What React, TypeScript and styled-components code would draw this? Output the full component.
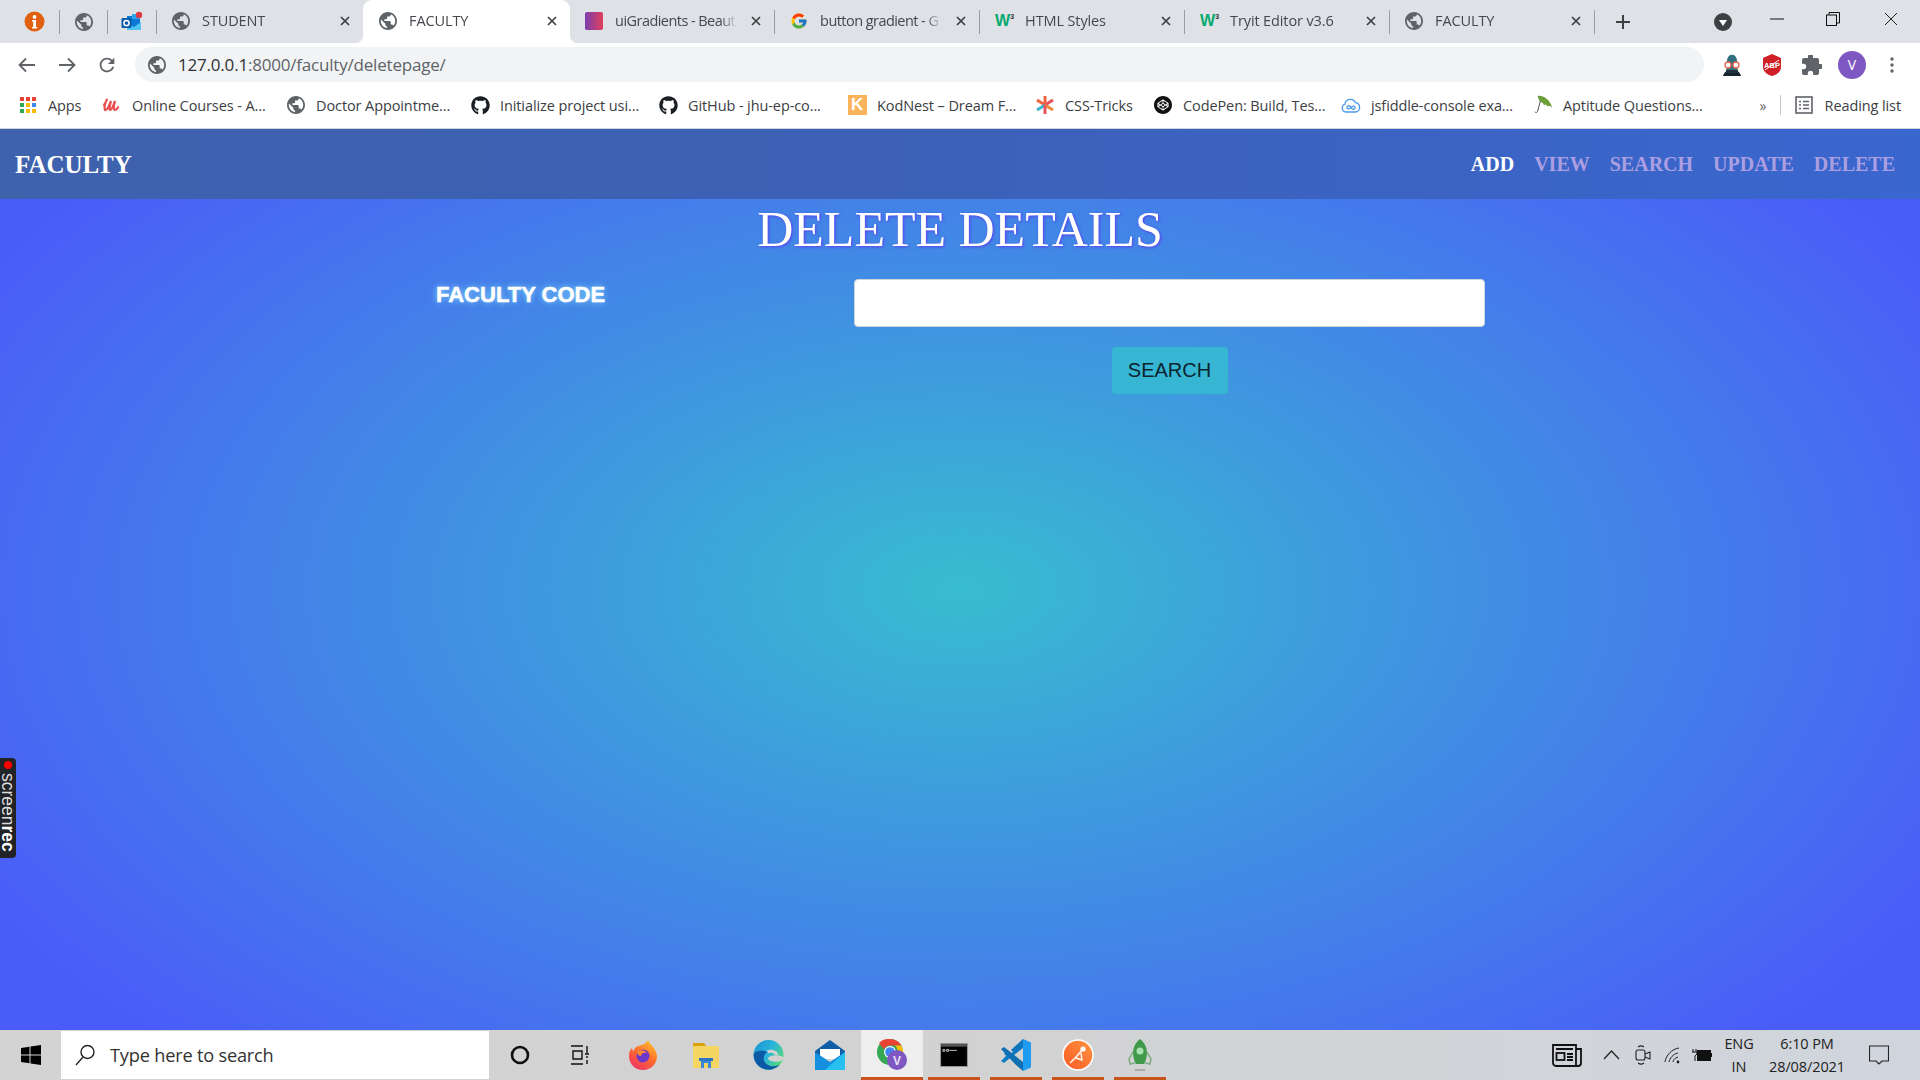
import React from "react";
import styled, { createGlobalStyle } from "styled-components";
import { FaGithub } from "react-icons/fa";
import { FcGoogle } from "react-icons/fc";
import { SiCodepen } from "react-icons/si";

const Global = createGlobalStyle`
  html, body { margin: 0; padding: 0; background: #fff; }
  * { box-sizing: border-box; }
`;

const UI = `"Open Sans", "Noto Sans", sans-serif`;

const Root = styled.div`
  position: relative;
  width: 1920px;
  height: 1080px;
  display: flex;
  flex-direction: column;
  overflow: hidden;
  font-family: ${UI};
`;

const TabStrip = styled.div`
  height: 43px;
  flex: none;
  display: flex;
  align-items: center;
  background: #dee1e6;
  padding-left: 11px;
`;
const Pinned = styled.div`
  width: 47.7px;
  height: 28px;
  display: flex;
  align-items: center;
  justify-content: center;
  flex: none;
`;
const Sep = styled.div`
  width: 1px;
  height: 24px;
  background: #9a9da1;
  flex: none;
`;
const Tab = styled.div<{ $active?: boolean; $w: number }>`
  position: relative;
  width: ${(p) => p.$w}px;
  height: 43px;
  flex: none;
  display: flex;
  align-items: center;
  gap: 12px;
  padding: 0 12px 2px ${(p) => (p.$active ? 16 : 15)}px;
  background: ${(p) => (p.$active ? "#fff" : "transparent")};
  border-radius: ${(p) => (p.$active ? "9px 9px 0 0" : "0")};
  ${(p) =>
    p.$active &&
    `
    &::before, &::after {
      content: "";
      position: absolute;
      bottom: 0;
      width: 8px;
      height: 8px;
    }
    &::before { left: -8px; background: radial-gradient(circle at 0 0, transparent 8px, #fff 8.5px); }
    &::after { right: -8px; background: radial-gradient(circle at 100% 0, transparent 8px, #fff 8.5px); }
  `}
`;
const TabTitle = styled.span<{ $tight?: boolean }>`
  flex: 1;
  min-width: 0;
  white-space: nowrap;
  overflow: hidden;
  font-size: 14.5px;
  letter-spacing: ${(p) => (p.$tight ? "-0.55px" : "-0.12px")};
  color: #45484c;
  mask-image: linear-gradient(90deg, #000 86%, transparent 99%);
`;
const TabIcon = styled.span`
  width: 18px;
  height: 18px;
  flex: none;
  display: flex;
  align-items: center;
  justify-content: center;
`;
const W3Logo = styled.span`
  font-family: "Liberation Sans", sans-serif;
  font-weight: 700;
  font-size: 16px;
  line-height: 18px;
  color: #04aa6d;
  letter-spacing: -1px;
  & > sup {
    font-size: 7px;
    color: #333;
    vertical-align: 7px;
    line-height: 0;
    margin-left: 1px;
  }
`;
const NewTab = styled.div`
  width: 56px;
  display: flex;
  justify-content: center;
  flex: none;
`;
const StripSpacer = styled.div`
  flex: 1;
`;
const ProfileMenu = styled.div`
  width: 20px;
  height: 20px;
  margin-right: 16px;
  display: flex;
  flex: none;
`;
const WinButton = styled.div<{ $w: number }>`
  width: ${(p) => p.$w}px;
  height: 43px;
  display: flex;
  align-items: center;
  justify-content: center;
  flex: none;
  padding-bottom: 6px;
`;

const Toolbar = styled.div`
  height: 43px;
  flex: none;
  background: #fff;
  display: flex;
  align-items: center;
  padding: 0 8px 0 7px;
`;
const ToolBtn = styled.div`
  width: 40px;
  height: 34px;
  flex: none;
  display: flex;
  align-items: center;
  justify-content: center;
`;
const Omnibox = styled.div`
  flex: 1;
  height: 35px;
  margin: 0 8px;
  border-radius: 18px;
  background: #f1f3f4;
  display: flex;
  align-items: center;
  gap: 12px;
  padding-left: 13px;
  font-size: 17px;
  letter-spacing: -0.2px;
  color: #5f6368;
  & > span > b {
    font-weight: 400;
    color: #303134;
  }
`;
const Avatar = styled.div`
  width: 28px;
  height: 28px;
  border-radius: 50%;
  background: #7e57c2;
  color: #fff;
  font-size: 14px;
  display: flex;
  align-items: center;
  justify-content: center;
`;

const Bookmarks = styled.div`
  height: 43px;
  flex: none;
  background: #fff;
  border-bottom: 1px solid #cfd4dc;
  display: flex;
  align-items: center;
  padding: 0 0 4px 18px;
`;
const Bookmark = styled.div<{ $w: number }>`
  width: ${(p) => p.$w}px;
  flex: none;
  display: flex;
  align-items: center;
  gap: 10px;
  font-size: 14.5px;
  letter-spacing: -0.1px;
  color: #3c4043;
  white-space: nowrap;
`;
const BmIcon = styled.span`
  width: 20px;
  height: 20px;
  flex: none;
  display: flex;
  align-items: center;
  justify-content: center;
`;
const KLogo = styled.span`
  width: 19px;
  height: 20px;
  background: #fbb45c;
  color: #fff;
  font-family: "Liberation Sans", sans-serif;
  font-weight: 700;
  font-size: 17px;
  line-height: 20px;
  text-align: center;
`;
const BarEnd = styled.div`
  margin-left: auto;
  display: flex;
  align-items: center;
  padding-right: 19px;
  font-size: 14.5px;
  letter-spacing: -0.1px;
  color: #3c4043;
`;
const More = styled.span`
  width: 18px;
  color: #5f6368;
  font-size: 14px;
  margin-right: 2px;
`;
const BarSep = styled.div`
  width: 1px;
  height: 20px;
  background: #c6c8cb;
  margin-right: 14px;
`;
const ReadingLabel = styled.span`
  margin-left: 12px;
`;

const Page = styled.main`
  flex: 1;
  min-height: 0;
  background: radial-gradient(ellipse 1120px 640px at 50% 51%, #38bcd0 0%, #4a5cf8 100%);
`;
const Nav = styled.nav`
  height: 70px;
  display: flex;
  align-items: center;
  justify-content: space-between;
  padding: 2px 25px 0 15px;
  background: linear-gradient(90deg, #3f62ad 0%, #3c60b4 40%, #3a66cf 100%);
  font-family: "Liberation Serif", serif;
  font-weight: 700;
`;
const Brand = styled.div`
  font-size: 25px;
  color: #fff;
`;
const NavLinks = styled.div`
  display: flex;
  gap: 20px;
  padding-bottom: 2px;
`;
const NavLink = styled.a<{ $current?: boolean }>`
  font-size: 20px;
  color: ${(p) => (p.$current ? "#fff" : "#ab9fe2")};
`;
const Title = styled.h1`
  margin: 0;
  text-align: center;
  font-family: "Liberation Serif", serif;
  font-weight: 400;
  font-size: 50px;
  line-height: 60px;
  color: #fff;
  text-shadow: 1px 1px 3px #5a3df0;
`;
const Form = styled.form`
  margin-top: 20px;
  padding-left: 436px;
  display: grid;
  grid-template-columns: 418px 631px;
  row-gap: 20px;
`;
const FieldLabel = styled.label`
  padding-top: 3px;
  font-family: "Liberation Sans", sans-serif;
  font-weight: 700;
  font-size: 22px;
  line-height: 26px;
  color: #fff;
  -webkit-text-stroke: 0.5px #fff;
  text-shadow: 0 0 6px #8fe0ff;
`;
const Input = styled.input`
  height: 48px;
  width: 100%;
  border: 1px solid #ced4da;
  border-radius: 4px;
  background: #fff;
`;
const SubmitCell = styled.div`
  grid-column: 2;
  display: flex;
  justify-content: center;
`;
const Submit = styled.button`
  width: 116px;
  height: 47px;
  border: 0;
  border-radius: 4px;
  background: #36b6d2;
  color: #0d2530;
  font-family: "Liberation Sans", sans-serif;
  font-size: 20px;
  padding: 0 0 1px;
`;

const Recorder = styled.div`
  position: absolute;
  left: 0;
  top: 758px;
  width: 16px;
  height: 100px;
  background: #222326;
  border-radius: 0 4px 4px 0;
  display: flex;
  flex-direction: column;
  align-items: center;
  padding-top: 3px;
`;
const RecDot = styled.div`
  width: 8px;
  height: 8px;
  border-radius: 50%;
  background: #f00;
  flex: none;
`;
const RecText = styled.div`
  writing-mode: vertical-rl;
  font-family: "Liberation Sans", sans-serif;
  font-size: 17.5px;
  line-height: 16px;
  margin-top: 4px;
  color: #ddd;
  white-space: nowrap;
  & > b {
    color: #fff;
  }
`;

const Taskbar = styled.footer`
  height: 50px;
  flex: none;
  display: flex;
  align-items: stretch;
  background: linear-gradient(90deg, #d3d3d3 0%, #d2d2d2 50%, #d0d5dd 100%);
`;
const StartBtn = styled.div`
  width: 61px;
  flex: none;
  display: flex;
  align-items: center;
  justify-content: center;
`;
const SearchBox = styled.div`
  width: 428px;
  flex: none;
  margin: 1px 0;
  background: #fff;
  display: flex;
  align-items: center;
  gap: 14px;
  padding-left: 13px;
  font-size: 18.2px;
  letter-spacing: -0.2px;
  color: #333;
`;
const TaskSlot = styled.div<{ $open?: boolean; $active?: boolean; $w?: number }>`
  position: relative;
  width: ${(p) => p.$w ?? 62}px;
  flex: none;
  display: flex;
  align-items: center;
  justify-content: center;
  background: ${(p) => (p.$active ? "#eeeeee" : "transparent")};
  ${(p) =>
    p.$open &&
    `
    &::after {
      content: "";
      position: absolute;
      bottom: 0;
      height: 3px;
      left: ${p.$active ? 0 : 5}px;
      right: ${p.$active ? 0 : 5}px;
      background: #c8541b;
    }
  `}
`;
const Tray = styled.div`
  margin-left: auto;
  padding-right: 14px;
  display: flex;
  align-items: center;
`;
const TrayIcon = styled.div<{ $w: number }>`
  width: ${(p) => p.$w}px;
  flex: none;
  display: flex;
  justify-content: center;
  align-items: center;
`;
const TrayText = styled.div<{ $w: number }>`
  width: ${(p) => p.$w}px;
  flex: none;
  display: flex;
  flex-direction: column;
  align-items: center;
  gap: 5px;
  font-size: 14.5px;
  line-height: 18px;
  letter-spacing: -0.1px;
  color: #222;
`;

const Globe = ({ s = 18 }: { s?: number }) => (
  <svg width={s} height={s} viewBox="2 2 20 20" fill="#5f6368">
    <path d="M12 2C6.48 2 2 6.48 2 12s4.48 10 10 10 10-4.48 10-10S17.52 2 12 2zm-1 17.93c-3.95-.49-7-3.85-7-7.93 0-.62.08-1.21.21-1.79L9 15v1c0 1.1.9 2 2 2v1.93zm6.9-2.54c-.26-.81-1-1.39-1.9-1.39h-1v-3c0-.55-.45-1-1-1H8v-2h2c.55 0 1-.45 1-1V7h2c1.1 0 2-.9 2-2v-.41c2.93 1.19 5 4.06 5 7.41 0 2.08-.8 3.97-2.1 5.39z" />
  </svg>
);
const CloseGlyph = styled.svg`
  flex: none;
`;
const CloseX = () => (
  <CloseGlyph width="12" height="12" viewBox="0 0 12 12" stroke="#3c4043" strokeWidth="1.7" fill="none">
    <path d="M2 2l8 8M10 2l-8 8" />
  </CloseGlyph>
);
const InfoIcon = () => (
  <svg width="21" height="21" viewBox="0 0 21 21">
    <circle cx="10.5" cy="10.5" r="10" fill="#e0600f" />
    <circle cx="10.5" cy="6" r="1.9" fill="#fff" />
    <path d="M8 9h4v7h1.2v1.6H8V16h1.2v-5.4H8z" fill="#fff" />
  </svg>
);
const Outlook = () => (
  <svg width="22" height="22" viewBox="0 0 22 22">
    <path d="M6 5h13v13H6z" fill="#0f78d4" />
    <path d="M11 3h8v5h-8z" fill="#28a8ea" />
    <path d="M6 12l7 4 7-5v8H6z" fill="#50c3f0" />
    <rect x="0.5" y="7" width="10" height="10" rx="1" fill="#0a5ca8" />
    <circle cx="5.5" cy="12" r="2.6" fill="none" stroke="#fff" strokeWidth="1.5" />
    <circle cx="18" cy="4" r="3.2" fill="#e03a45" />
  </svg>
);
const GradientSquare = () => (
  <svg width="20" height="20" viewBox="0 0 20 20">
    <defs>
      <linearGradient id="ug" x1="0" x2="1" y1="0" y2="0">
        <stop offset="0" stopColor="#7b3fb0" />
        <stop offset="1" stopColor="#e0405a" />
      </linearGradient>
    </defs>
    <rect width="20" height="20" rx="2" fill="url(#ug)" />
  </svg>
);
const W3 = () => (
  <W3Logo>
    W<sup>3</sup>
  </W3Logo>
);
const Apps = () => (
  <svg width="16" height="16" viewBox="0 0 16 16">
    {[
      "#ea4335", "#ea4335", "#ea4335",
      "#34a853", "#fbbc04", "#4285f4",
      "#34a853", "#fbbc04", "#fbbc04",
    ].map((c, i) => (
      <rect key={i} x={(i % 3) * 6} y={Math.floor(i / 3) * 6} width="4" height="4" fill={c} />
    ))}
  </svg>
);
const ULogo = () => (
  <svg width="18" height="18" viewBox="0 0 18 18" fill="none" stroke="#ec5252" strokeWidth="2.2" strokeLinecap="round">
    <path d="M1 9c2-3 3-5 3-6-2 4-3 8-2 11 2 1 4-4 6-9-1 4-2 8-1 9 2 0 3-4 5-9-1 4-2 9 0 9 1 0 3-2 3-3" />
  </svg>
);
const CssTricks = () => (
  <svg width="20" height="20" viewBox="0 0 20 20" strokeWidth="3" strokeLinecap="butt">
    <path d="M10 1v9" stroke="#f0613f" />
    <path d="M2 5l8 5" stroke="#f0613f" />
    <path d="M18 5l-8 5" stroke="#e8505b" />
    <path d="M2 15l8-5" stroke="#3db5c9" />
    <path d="M18 15l-8-5" stroke="#f08a3f" />
    <path d="M10 19v-9" stroke="#e8505b" />
  </svg>
);
const CloudInf = () => (
  <svg width="20" height="16" viewBox="0 0 20 16" fill="none" stroke="#4a9bea" strokeWidth="1.3">
    <path d="M5 15a4 4 0 0 1-1-7.8 5.5 5.5 0 0 1 10.5-1.6A4.8 4.8 0 0 1 15 15z" />
    <path d="M10 10.5c-1-1.4-2-2-3-1.7-1.5.5-1.5 2.600 0 3 1 .3 2-.3 3-1.300 1-1 2-1.600 3-1.300 1.500.400 1.500 2.500 0 3-1 .3-2-.300-3-1.700z" />
  </svg>
);
const Umbrella = () => (
  <svg width="24" height="24" viewBox="0 0 22 22">
    <path d="M5 1c6-1 14 4 16 13-2-2-4-3-5-1-1-3-3-3-4-2-1-3-3-3-4-3C7 6 6 4 5 1z" fill="#6c9e3a" />
    <path d="M8 7L5 18c-.4 1.500-2 1.500-3 .5" fill="none" stroke="#555" strokeWidth="1.1" />
  </svg>
);
const ReadingList = () => (
  <svg width="18" height="18" viewBox="0 0 18 18" fill="none" stroke="#5f6368" strokeWidth="1.6">
    <rect x="1" y="1" width="16" height="16" />
    <path d="M4 5.500h2M8 5.500h6M4 9h2M8 9h6M4 12.500h2M8 12.500h6" />
  </svg>
);
const Spy = () => (
  <svg width="24" height="24" viewBox="0 0 24 24">
    <path d="M6 21l1-14c1-7 9-7 10 0l1 14z" fill="#2f6f7f" />
    <path d="M3 23c1-4 4-6 9-6s8 2 9 6z" fill="#15262c" />
    <circle cx="8" cy="12" r="3" fill="#fff" stroke="#e8654a" strokeWidth="1.3" />
    <circle cx="16" cy="12" r="3" fill="#fff" stroke="#e8654a" strokeWidth="1.3" />
    <path d="M6 17h12v3H6z" fill="#20343a" />
  </svg>
);
const Abp = () => (
  <svg width="20" height="24" viewBox="0 0 20 24">
    <path d="M10 1l9 4v9c0 5-5 8-9 9-4-1-9-4-9-9V5z" fill="#d01f26" />
    <text x="10" y="15" textAnchor="middle" fontSize="7.500" fontWeight="700" fontFamily="Liberation Sans" fill="#fff">ABP</text>
    <path d="M3 17L17 7" stroke="#fff" strokeWidth="1" />
  </svg>
);
const Puzzle = () => (
  <svg width="20" height="20" viewBox="2 2 20 20" fill="#5f6368">
    <path d="M20.500 11H19V7a2 2 0 0 0-2-2h-4V3.500a2.500 2.500 0 0 0-5 0V5H4a2 2 0 0 0-2 2v3.800h1.500a2.700 2.700 0 0 1 0 5.400H2V20a2 2 0 0 0 2 2h3.800v-1.500a2.700 2.700 0 0 1 5.400 0V22H17a2 2 0 0 0 2-2v-4h1.500a2.500 2.500 0 0 0 0-5z" />
  </svg>
);
const Firefox = () => (
  <svg width="30" height="32" viewBox="0 0 30 32">
    <defs>
      <linearGradient id="ff" x1="0.800" y1="0" x2="0.200" y2="1">
        <stop offset="0" stopColor="#ffc22e" />
        <stop offset="0.500" stopColor="#ff6a2e" />
        <stop offset="1" stopColor="#f0306a" />
      </linearGradient>
    </defs>
    <path d="M20 1c1 4 8 7 9 16 0 8-6 14-14 14S1 25 1 17c0-4 1-6 3-8 0 2 1 3 2 3 0-3 3-5 5-5 2-1 7-2 9-6z" fill="url(#ff)" />
    <circle cx="15" cy="17" r="6.500" fill="#6b38c8" />
    <path d="M9 13c3-3 8-2 10 1-3-1-6 0-6 3-2 0-4-2-4-4z" fill="#ff8a30" />
  </svg>
);
const Explorer = () => (
  <svg width="28" height="28" viewBox="0 0 28 28">
    <path d="M1 2h11l3 4H1z" fill="#d9a00f" />
    <path d="M1 5h26v22H1z" fill="#f6d662" />
    <path d="M9 18h10v9h-3v-5h-4v5H9z" fill="#3b8ad9" />
    <path d="M7 17h14v3H7z" fill="#2a74c2" />
  </svg>
);
const Edge = () => (
  <svg width="31" height="32" viewBox="0 0 31 32">
    <defs>
      <linearGradient id="eg" x1="0" y1="0" x2="1" y2="0.600">
        <stop offset="0" stopColor="#1a8ed0" />
        <stop offset="0.550" stopColor="#2ab4dc" />
        <stop offset="1" stopColor="#55d97a" />
      </linearGradient>
    </defs>
    <circle cx="15.500" cy="16" r="15" fill="url(#eg)" />
    <path d="M.6 16a15 15 0 0 0 26.400 9.500c-6 3-13 2-15.500-3-2-4 0-8 3-9.500-6-2.500-13.500-1-13.900 3z" fill="#0c5aa6" />
    <ellipse cx="23" cy="19.500" rx="8" ry="3.200" fill="#d2d2d2" />
    <path d="M14.500 13c3-1.500 8-1 9.500 3" fill="none" stroke="#d2d2d2" strokeWidth="3" />
  </svg>
);
const Mail = () => (
  <svg width="30" height="32" viewBox="0 0 30 32">
    <path d="M15 1L30 12v6H0v-6z" fill="#0f5ea8" />
    <path d="M5 10h20v10H5z" fill="#fff" />
    <path d="M0 13l15 10 15-10v18H0z" fill="#1490df" />
    <path d="M30 13v18H10z" fill="#28c0f0" />
  </svg>
);
const ChromeV = () => (
  <svg width="32" height="34" viewBox="0 0 32 34">
    <circle cx="14" cy="14" r="13" fill="#34a853" />
    <path d="M14 1a13 13 0 0 1 11.300 6.500H14a6.500 6.500 0 0 0-6 4L3 5a13 13 0 0 1 11-4z" fill="#ea4335" />
    <path d="M25.300 7.500A13 13 0 0 1 14 27l6-10a6.500 6.500 0 0 0-1-9.500z" fill="#fbbc04" />
    <circle cx="14" cy="14" r="6" fill="#fff" />
    <circle cx="14" cy="14" r="4.800" fill="#4285f4" />
    <circle cx="21" cy="22" r="10" fill="#7e57c2" />
    <text x="21" y="26.500" textAnchor="middle" fontSize="12" fontWeight="700" fontFamily="Liberation Sans" fill="#e8e0f5">V</text>
  </svg>
);
const Terminal = () => (
  <svg width="28" height="24" viewBox="0 0 30 26">
    <rect x="0.500" y="0.500" width="29" height="25" fill="#000" stroke="#9a9a9a" />
    <rect x="1" y="1" width="28" height="3" fill="#555" />
    <path d="M3 7h2v2H3zM7 7h2v2H7zM10 8h8" stroke="#ccc" fill="none" strokeWidth="1" />
  </svg>
);
const VSCode = () => (
  <svg width="32" height="34" viewBox="0 0 32 34">
    <path d="M23 1l8 3.500v25L23 33z" fill="#1f9cf0" />
    <path d="M23 1v9L9.500 20.500 4 16l2-2 4 3z" fill="#0f7cc8" />
    <path d="M1 11l3-2 19 15v9l-8-7z" fill="#0f6fb3" />
    <path d="M23 1L11 12l3.500 3L23 9z" fill="#0e76bd" />
    <path d="M1 23l3 2 6-5-3-3z" fill="#0f7cc8" />
  </svg>
);
const Postman = () => (
  <svg width="32" height="32" viewBox="0 0 32 32">
    <defs>
      <linearGradient id="pm" x1="1" y1="0" x2="0" y2="1">
        <stop offset="0" stopColor="#ff9440" />
        <stop offset="1" stopColor="#fa5a25" />
      </linearGradient>
    </defs>
    <circle cx="16" cy="16" r="15" fill="url(#pm)" stroke="#fff" strokeWidth="1.500" />
    <path d="M8 24l9-9M15 17l5-6M14 19l6 2-1-7" stroke="#fff" strokeWidth="1.400" fill="none" />
    <circle cx="21" cy="10" r="2.600" fill="#fff" />
  </svg>
);
const Rocket = () => (
  <svg width="26" height="34" viewBox="0 0 26 34">
    <path d="M13 1c5 4 7 9 7 14 0 5-2 9-3 11H9c-1-2-3-6-3-11 0-5 2-10 7-14z" fill="#3f9b4a" />
    <circle cx="13" cy="13" r="3.500" fill="#a8e0b0" />
    <path d="M6 14l-4 7 1 5 5-1M20 14l4 7-1 5-5-1" fill="none" stroke="#7fae85" strokeWidth="1.500" />
    <rect x="8" y="31" width="10" height="2" fill="#aaa" />
  </svg>
);
const News = () => (
  <svg width="30" height="23" viewBox="0 0 30 23" fill="none" stroke="#111" strokeWidth="1.800">
    <path d="M1 1h23v21H4a3 3 0 0 1-3-3zM24 5h5v14a3 3 0 0 1-3 3h-2" />
    <rect x="4.500" y="9" width="8" height="7" />
    <path d="M4 5h17M15 10h6M15 13h6M15 16h6" />
  </svg>
);
const Meet = () => (
  <svg width="16" height="22" viewBox="0 0 16 22" fill="none" stroke="#222" strokeWidth="1.100">
    <rect x="1" y="6" width="9" height="10" rx="2" />
    <path d="M10 10l5-2v7l-5-2" />
    <path d="M3 3c2-1.500 4-1.500 6 0M3 19c2 1.500 4 1.500 6 0" />
  </svg>
);
const Wifi = () => (
  <svg width="18" height="17" viewBox="0 0 18 17" fill="none" stroke="#222" strokeWidth="1">
    <path d="M1 15C2 8 8 2 15 1M5 15c1-4 4-8 9-9M9 15c0-2 2-4 5-5" />
    <circle cx="14" cy="15" r="1.400" fill="#222" stroke="none" />
  </svg>
);
const Battery = () => (
  <svg width="20" height="14" viewBox="0 0 20 14">
    <rect x="5" y="2" width="14" height="11" fill="#111" />
    <rect x="19" y="5" width="1" height="4" fill="#111" />
    <path d="M1 1v3M4 1v3M0 4h5v2L3 8v5" stroke="#111" fill="none" strokeWidth="1" />
  </svg>
);

const bookmarks: [number, React.ReactNode, string][] = [
  [84, <Apps />, "Apps"],
  [184, <ULogo />, "Online Courses - A..."],
  [184, <Globe />, "Doctor Appointme..."],
  [188, <FaGithub size={19} color="#1b1f23" />, "Initialize project usi..."],
  [189, <FaGithub size={19} color="#1b1f23" />, "GitHub - jhu-ep-co..."],
  [188, <KLogo>K</KLogo>, "KodNest – Dream F..."],
  [118, <CssTricks />, "CSS-Tricks"],
  [188, <SiCodepen size={18} color="#111" />, "CodePen: Build, Tes..."],
  [192, <CloudInf />, "jsfiddle-console exa..."],
  [180, <Umbrella />, "Aptitude Questions..."],
];

const tabs: [React.ReactNode, string, number, boolean?, boolean?][] = [
  [<Globe />, "STUDENT", 206],
  [<Globe />, "FACULTY", 207, true],
  [<GradientSquare />, "uiGradients - Beaut", 204, false, true],
  [<FcGoogle size={18} />, "button gradient - G", 204, false, true],
  [<W3 />, "HTML Styles", 204],
  [<W3 />, "Tryit Editor v3.6", 204],
  [<Globe />, "FACULTY", 204],
];

export default function App() {
  return (
    <Root>
      <Global />
      <TabStrip>
        <Pinned><InfoIcon /></Pinned>
        <Sep />
        <Pinned><Globe /></Pinned>
        <Sep />
        <Pinned><Outlook /></Pinned>
        <Sep />
        {tabs.map(([icon, title, w, active, tight], i) => (
          <React.Fragment key={i}>
            <Tab $active={active} $w={w}>
              <TabIcon>{icon}</TabIcon>
              <TabTitle $tight={tight}>{title}</TabTitle>
              <CloseX />
            </Tab>
            {i > 0 && !active && <Sep />}
          </React.Fragment>
        ))}
        <NewTab>
          <svg width="16" height="16" viewBox="0 0 16 16" stroke="#3c4043" strokeWidth="2">
            <path d="M8 1v14M1 8h14" />
          </svg>
        </NewTab>
        <StripSpacer />
        <ProfileMenu>
          <svg width="20" height="20" viewBox="0 0 20 20">
            <circle cx="10" cy="10" r="9" fill="#3c4043" />
            <path d="M6 8h8l-4 6z" fill="#fff" />
          </svg>
        </ProfileMenu>
        <WinButton $w={56}>
          <svg width="14" height="2" viewBox="0 0 14 2"><path d="M0 1h14" stroke="#111" /></svg>
        </WinButton>
        <WinButton $w={56}>
          <svg width="14" height="14" viewBox="0 0 14 14" fill="none" stroke="#111">
            <rect x="0.500" y="3" width="10" height="10.500" />
            <path d="M3 3V.5h10.500v10.500H10.500" />
          </svg>
        </WinButton>
        <WinButton $w={59}>
          <svg width="14" height="14" viewBox="0 0 14 14" stroke="#222"><path d="M1 1l12 12M13 1L1 13" /></svg>
        </WinButton>
      </TabStrip>

      <Toolbar>
        <ToolBtn>
          <svg width="18" height="16" viewBox="0 0 18 16" fill="none" stroke="#5f6368" strokeWidth="1.800"><path d="M17 8H2M8 1.500L1.500 8 8 14.500" /></svg>
        </ToolBtn>
        <ToolBtn>
          <svg width="18" height="16" viewBox="0 0 18 16" fill="none" stroke="#5f6368" strokeWidth="1.800"><path d="M1 8h15M10 1.500L16.500 8 10 14.500" /></svg>
        </ToolBtn>
        <ToolBtn>
          <svg width="22" height="22" viewBox="0 0 24 24" fill="#5f6368"><path d="M17.650 6.350A7.958 7.958 0 0 0 12 4c-4.420 0-7.990 3.580-7.990 8s3.570 8 7.990 8c3.730 0 6.840-2.550 7.730-6h-2.080A5.990 5.990 0 0 1 12 18c-3.310 0-6-2.690-6-6s2.690-6 6-6c1.660 0 3.140.69 4.220 1.780L13 11h7V4l-2.350 2.350z" /></svg>
        </ToolBtn>
        <Omnibox>
          <Globe />
          <span><b>127.0.0.1</b>:8000/faculty/deletepage/</span>
        </Omnibox>
        <ToolBtn><Spy /></ToolBtn>
        <ToolBtn><Abp /></ToolBtn>
        <ToolBtn><Puzzle /></ToolBtn>
        <ToolBtn><Avatar>V</Avatar></ToolBtn>
        <ToolBtn>
          <svg width="4" height="16" viewBox="0 0 4 16" fill="#5f6368">
            <circle cx="2" cy="2" r="1.700" /><circle cx="2" cy="8" r="1.700" /><circle cx="2" cy="14" r="1.700" />
          </svg>
        </ToolBtn>
      </Toolbar>

      <Bookmarks>
        {bookmarks.map(([w, icon, label], i) => (
          <Bookmark key={i} $w={w}>
            <BmIcon>{icon}</BmIcon>
            <span>{label}</span>
          </Bookmark>
        ))}
        <BarEnd>
          <More>»</More>
          <BarSep />
          <ReadingList />
          <ReadingLabel>Reading list</ReadingLabel>
        </BarEnd>
      </Bookmarks>

      <Page>
        <Nav>
          <Brand>FACULTY</Brand>
          <NavLinks>
            <NavLink $current>ADD</NavLink>
            <NavLink>VIEW</NavLink>
            <NavLink>SEARCH</NavLink>
            <NavLink>UPDATE</NavLink>
            <NavLink>DELETE</NavLink>
          </NavLinks>
        </Nav>
        <Title>DELETE DETAILS</Title>
        <Form onSubmit={(e) => e.preventDefault()}>
          <FieldLabel htmlFor="code">FACULTY CODE</FieldLabel>
          <Input id="code" />
          <SubmitCell>
            <Submit>SEARCH</Submit>
          </SubmitCell>
        </Form>
      </Page>

      <Recorder>
        <RecDot />
        <RecText>screen<b>rec</b></RecText>
      </Recorder>

      <Taskbar>
        <StartBtn>
          <svg width="20" height="20" viewBox="0 0 20 20" fill="#000">
            <path d="M0 3l8.500-1.200v7.700H0zM9.500 1.600L20 0v9.500H9.500zM0 10.500h8.500v7.700L0 17zM9.500 10.500H20V20L9.500 18.400z" />
          </svg>
        </StartBtn>
        <SearchBox>
          <svg width="22" height="22" viewBox="0 0 22 22" fill="none" stroke="#222" strokeWidth="1.400">
            <circle cx="13.500" cy="8" r="6.500" />
            <path d="M9 13L2 21" />
          </svg>
          Type here to search
        </SearchBox>
        <TaskSlot $w={61}>
          <svg width="20" height="20" viewBox="0 0 20 20" fill="none" stroke="#111" strokeWidth="2.600"><circle cx="10" cy="10" r="8" /></svg>
        </TaskSlot>
        <TaskSlot $w={60}>
          <svg width="20" height="20" viewBox="0 0 20 20" fill="none" stroke="#111" strokeWidth="1.400">
            <path d="M1 1h12M1 19h12M3 6h9v8H3zM17 1v7M17 11v2M17 15v4M15 9h4" />
          </svg>
        </TaskSlot>
        <TaskSlot $w={65}><Firefox /></TaskSlot>
        <TaskSlot><Explorer /></TaskSlot>
        <TaskSlot><Edge /></TaskSlot>
        <TaskSlot><Mail /></TaskSlot>
        <TaskSlot $open $active><ChromeV /></TaskSlot>
        <TaskSlot $open><Terminal /></TaskSlot>
        <TaskSlot $open><VSCode /></TaskSlot>
        <TaskSlot $open><Postman /></TaskSlot>
        <TaskSlot $open><Rocket /></TaskSlot>
        <Tray>
          <TrayIcon $w={54}><News /></TrayIcon>
          <TrayIcon $w={34}>
            <svg width="17" height="10" viewBox="0 0 17 10" fill="none" stroke="#222" strokeWidth="1.200"><path d="M1 9l7.500-8L16 9" /></svg>
          </TrayIcon>
          <TrayIcon $w={30}><Meet /></TrayIcon>
          <TrayIcon $w={30}><Wifi /></TrayIcon>
          <TrayIcon $w={28}><Battery /></TrayIcon>
          <TrayText $w={46}><span>ENG</span><span>IN</span></TrayText>
          <TrayText $w={90}><span>6:10 PM</span><span>28/08/2021</span></TrayText>
          <TrayIcon $w={54}>
            <svg width="20" height="20" viewBox="0 0 20 20" fill="none" stroke="#222" strokeWidth="1.100"><path d="M.5 1h19v15H13l-3 3-3-3H.5z" /></svg>
          </TrayIcon>
        </Tray>
      </Taskbar>
    </Root>
  );
}
